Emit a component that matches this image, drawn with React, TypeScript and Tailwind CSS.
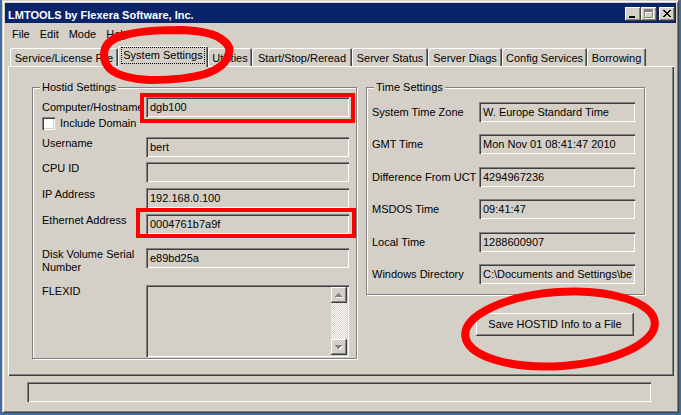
import React from 'react';

// classic 3d bevels
const sunken =
    'shadow-[inset_1px_1px_0_#808080,inset_2px_2px_0_#404040,inset_-1px_-1px_0_#fff,inset_-2px_-2px_0_#d4d0c8]';
const raised = 'shadow-[inset_-1px_-1px_0_#404040,inset_1px_1px_0_#fff,inset_-2px_-2px_0_#808080]';
const etched = 'border border-[#808080] shadow-[inset_1px_1px_0_#fff,1px_1px_0_#fff]';

const tabs = [
    { label: 'Service/License File', w: 'w-[108px]' },
    { label: 'System Settings', w: 'w-[90px]', active: true },
    { label: 'Utilities', w: 'w-[44px]' },
    { label: 'Start/Stop/Reread', w: 'w-[100px]' },
    { label: 'Server Status', w: 'w-[76px]' },
    { label: 'Server Diags', w: 'w-[74px]' },
    { label: 'Config Services', w: 'w-[85px]' },
    { label: 'Borrowing', w: 'w-[59px]' },
];

const timeRows = [
    { label: 'System Time Zone', value: 'W. Europe Standard Time', mt: 'mt-[14px]' },
    { label: 'GMT Time', value: 'Mon Nov 01 08:41:47 2010', mt: 'mt-[12px]' },
    { label: 'Difference From UCT', value: '4294967236', mt: 'mt-[13px]' },
    { label: 'MSDOS Time', value: '09:41:47', mt: 'mt-[12px]' },
    { label: 'Local Time', value: '1288600907', mt: 'mt-[13px]' },
    { label: 'Windows Directory', value: 'C:\\Documents and Settings\\be', mt: 'mt-[12px]' },
];

// pixel X for the close button
const closeX = Array.from({ length: 7 }, (_, i) => `M${i} ${i}h2v1h-2z M${6 - i} ${i}h2v1h-2z`).join(' ');
const arrowUp = 'M3 0h1v1h-1z M2 1h3v1h-3z M1 2h5v1h-5z M0 3h7v1h-7z';
const arrowDown = 'M0 0h7v1h-7z M1 1h5v1h-5z M2 2h3v1h-3z M3 3h1v1h-1z';

function Field({ value, className }: { value?: string; className: string }) {
    return (
        <div
            className={`${sunken} ${className} flex h-[20px] shrink-0 items-center overflow-hidden whitespace-nowrap pl-[4px] pr-[2px]`}
        >
            {value}
        </div>
    );
}

function ScrollArrow({ down }: { down?: boolean }) {
    return (
        <div className={`${raised} flex h-[16px] w-[16px] items-center justify-center bg-[#d4d0c8]`}>
            <svg width="8" height="5" viewBox="0 0 8 5" shapeRendering="crispEdges">
                <path d={down ? arrowDown : arrowUp} fill="#fff" transform="translate(1 1)" />
                <path d={down ? arrowDown : arrowUp} fill="#808080" />
            </svg>
        </div>
    );
}

function HostidSettings() {
    return (
        <div className={`relative h-[272px] w-[325px] ${etched}`}>
            <span className="absolute top-[-7px] left-[7px] bg-[#d4d0c8] px-[2px]">Hostid Settings</span>
            <div className="flex flex-col pt-[9px] pl-[9px]">
                <div className="flex h-[20px] items-center">
                    <span className="w-[104px] whitespace-nowrap">Computer/Hostname</span>
                    <Field value="dgb100" className="w-[203px]" />
                </div>
                <div className="flex h-[13px] items-center">
                    <div className={`h-[13px] w-[13px] bg-white ${sunken}`} />
                    <span className="ml-[5px]">Include Domain</span>
                </div>
                <div className="mt-[7px] flex items-start">
                    <span className="w-[104px]">Username</span>
                    <Field value="bert" className="w-[203px]" />
                </div>
                <div className="mt-[5px] flex items-start">
                    <span className="w-[104px]">CPU ID</span>
                    <Field className="w-[203px]" />
                </div>
                <div className="mt-[6px] flex items-start">
                    <span className="w-[104px]">IP Address</span>
                    <Field value="192.168.0.100" className="w-[203px]" />
                </div>
                <div className="mt-[6px] flex items-start">
                    <span className="w-[104px]">Ethernet Address</span>
                    <Field value="0004761b7a9f" className="w-[203px]" />
                </div>
                <div className="mt-[14px] flex items-start">
                    <span className="w-[104px]">
                        Disk Volume Serial
                        <br />
                        Number
                    </span>
                    <Field value="e89bd25a" className="w-[203px]" />
                </div>
                <div className="mt-[11px] flex items-start">
                    <span className="w-[104px]">FLEXID</span>
                    <div className={`${sunken} flex h-[72px] w-[203px] justify-end p-[2px]`}>
                        <div className="flex w-[16px] flex-col">
                            <ScrollArrow />
                            <div className="flex-1 bg-[image:repeating-conic-gradient(#d4d0c8_0_25%,#fff_0_50%)] bg-[length:2px_2px]" />
                            <ScrollArrow down />
                        </div>
                    </div>
                </div>
            </div>
        </div>
    );
}

function TimeSettings() {
    return (
        <div className={`relative h-[208px] w-[279px] ${etched}`}>
            <span className="absolute top-[-7px] left-[7px] bg-[#d4d0c8] px-[2px]">Time Settings</span>
            <div className="flex flex-col pl-[5px]">
                {timeRows.map((r) => (
                    <div key={r.label} className={`${r.mt} flex h-[20px] items-center`}>
                        <span className="w-[107px] whitespace-nowrap">{r.label}</span>
                        <Field value={r.value} className="w-[156px] pl-[3px]" />
                    </div>
                ))}
            </div>
        </div>
    );
}

function TitleButton({ children, className = '' }: { children: React.ReactNode; className?: string }) {
    return (
        <div className={`${raised} flex h-[14px] w-[16px] items-center justify-center bg-[#d4d0c8] ${className}`}>
            {children}
        </div>
    );
}

export default function App() {
    return (
        <div className="relative h-[415px] w-[681px] overflow-hidden bg-[#3a6ea5] pl-[2px] font-['Liberation_Sans',Arial,sans-serif] text-[11px] leading-[13px] text-black">
            <div className="flex h-[413px] w-[677px] flex-col border border-t-[#d4d0c8] border-r-[#404040] border-b-[#404040] border-l-[#d4d0c8] bg-[#d4d0c8] p-[2px] shadow-[inset_1px_1px_0_#fff,inset_-1px_-1px_0_#808080]">
                {/* caption */}
                <div className="flex h-[20px] shrink-0 items-center bg-[#0a246a] pr-[1px] pl-[3px]">
                    <span className="flex-1 pt-[4px] font-bold text-white">LMTOOLS by Flexera Software, Inc.</span>
                    <div className="flex items-start self-start pt-[4px]">
                        <TitleButton>
                            <svg width="16" height="14" viewBox="0 0 16 14" shapeRendering="crispEdges">
                                <rect x="4" y="9" width="6" height="2" fill="#000" />
                            </svg>
                        </TitleButton>
                        <TitleButton>
                            <svg width="16" height="14" viewBox="0 0 16 14" shapeRendering="crispEdges">
                                <path d="M4 3h9v9h-9z M5 6v5h7v-5z" fill="#fff" fillRule="evenodd" />
                                <path d="M3 2h9v9h-9z M4 5v5h7v-5z" fill="#808080" fillRule="evenodd" />
                            </svg>
                        </TitleButton>
                        <TitleButton className="ml-[2px]">
                            <svg width="16" height="14" viewBox="0 0 16 14" shapeRendering="crispEdges">
                                <path d={closeX} fill="#000" transform="translate(4 3)" />
                            </svg>
                        </TitleButton>
                    </div>
                </div>

                {/* menu */}
                <div className="mt-[1px] flex h-[20px] shrink-0 items-center pl-[2px]">
                    {['File', 'Edit', 'Mode', 'Help'].map((m) => (
                        <span key={m} className="px-[5px]">
                            {m}
                        </span>
                    ))}
                </div>

                {/* tabs */}
                <div className="mt-[2px] flex h-[20px] shrink-0 items-end pl-[5px]">
                    {tabs.map((t) =>
                        t.active ? (
                            <div
                                key={t.label}
                                className={`relative z-10 -mb-[1px] flex h-[21px] ${t.w} shrink-0 justify-center rounded-t-[2px] bg-[#d4d0c8] shadow-[inset_1px_1px_0_#fff,inset_-1px_0_0_#404040,inset_-2px_0_0_#808080]`}
                            >
                                <span className="mt-[1px] flex h-[17px] w-[84px] items-center justify-center border border-dotted border-black">
                                    {t.label}
                                </span>
                            </div>
                        ) : (
                            <div
                                key={t.label}
                                className={`flex h-[18px] ${t.w} shrink-0 items-center justify-center overflow-hidden rounded-t-[2px] pt-[2px] whitespace-nowrap shadow-[inset_1px_1px_0_#fff,inset_-1px_0_0_#404040,inset_-2px_0_0_#808080]`}
                            >
                                {t.label}
                            </div>
                        ),
                    )}
                </div>

                {/* tab page */}
                <div className="ml-[3px] flex h-[310px] w-[666px] shrink-0 gap-[9px] pt-[21px] pl-[24px] shadow-[inset_1px_1px_0_#fff,inset_-1px_-1px_0_#404040,inset_-2px_-2px_0_#808080]">
                    <HostidSettings />
                    <div className="flex flex-col">
                        <TimeSettings />
                        <button
                            type="button"
                            className={`${raised} mt-[18px] ml-[110px] h-[23px] w-[158px] bg-[#d4d0c8]`}
                        >
                            Save HOSTID Info to a File
                        </button>
                    </div>
                </div>

                {/* status bar */}
                <div className={`mt-[6px] ml-[22px] h-[20px] w-[624px] shrink-0 ${sunken}`} />
            </div>

            {/* red markup drawn over the screenshot */}
            <svg
                className="pointer-events-none absolute top-0 left-0"
                width="681"
                height="415"
                viewBox="0 0 681 415"
            >
                <path
                    d="M104 55 C104 44 112 38 125 35 C145 30 165 30 183 30 C200 31 211 33 218 37 C227 42 231 47 229 53 C227 63 217 70 205 74 C188 79 168 80 150 80 C130 79 117 75 110 69 C106 65 104 60 104 55 Z"
                    fill="none"
                    stroke="#ff0000"
                    strokeWidth="8"
                />
                <rect x="142" y="95" width="211" height="26" fill="none" stroke="#ff0000" strokeWidth="4" />
                <rect x="138" y="210" width="216" height="26" fill="none" stroke="#ff0000" strokeWidth="4" />
                <ellipse
                    cx="560"
                    cy="329"
                    rx="95"
                    ry="37"
                    transform="rotate(-4 560 329)"
                    fill="none"
                    stroke="#ff0000"
                    strokeWidth="8"
                />
            </svg>
        </div>
    );
}
